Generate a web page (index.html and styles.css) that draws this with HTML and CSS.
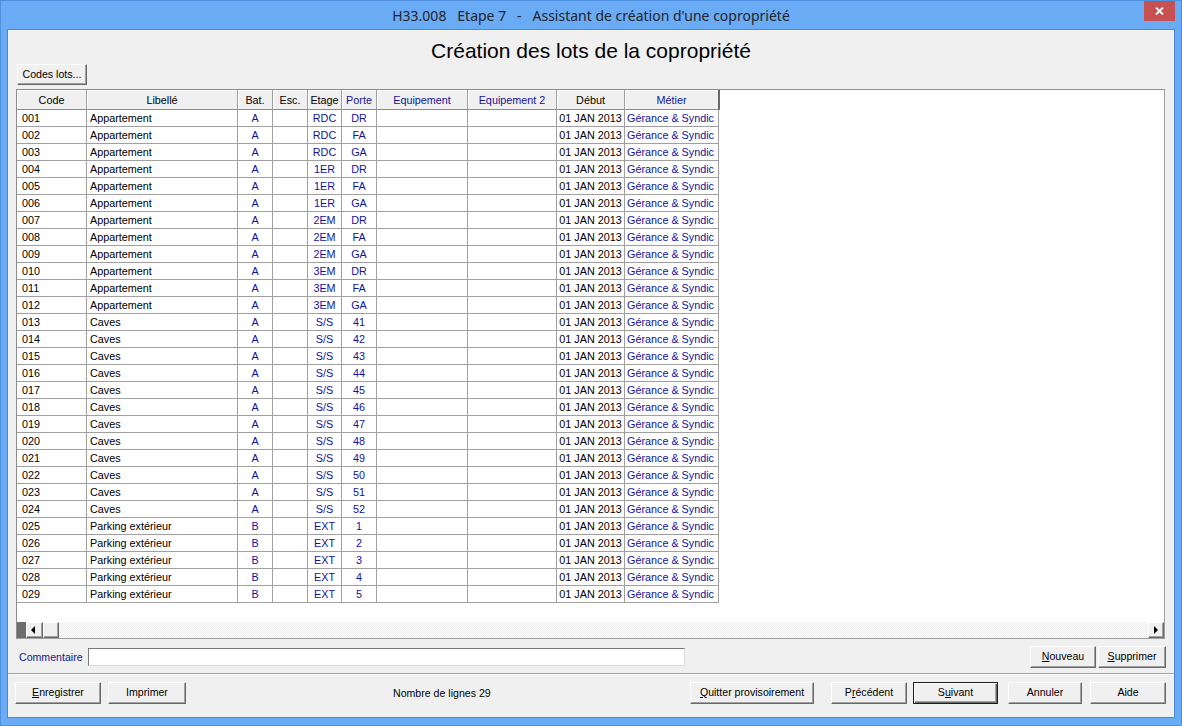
FILE: index.html
```html
<!DOCTYPE html>
<html lang="fr">
<head>
<meta charset="utf-8">
<title>H33.008 Etape 7 - Assistant de création d'une copropriété</title>
<link rel="stylesheet" href="styles.css">
</head>
<body>
<div class="window">
  <header class="titlebar">
    <div class="title">H33.008   Etape 7   -   Assistant de création d'une copropriété</div>
    <button class="close" aria-label="Fermer"><svg width="9" height="8" viewBox="0 0 9 8"><path d="M1 0.5 L8 7.5 M8 0.5 L1 7.5" stroke="#fff" stroke-width="1.8" fill="none"/></svg></button>
  </header>
  <main class="client">
    <h1 class="heading">Création des lots de la copropriété</h1>
    <div class="toolbar"><button class="btn btn-codes">Codes lots...</button></div>
    <section class="frame">
      <div class="grid">
        <div class="row head">
          <span>Code</span><span>Libellé</span><span>Bat.</span><span>Esc.</span><span>Etage</span><span class="b">Porte</span><span class="b">Equipement</span><span class="b">Equipement 2</span><span>Début</span><span class="b">Métier</span>
        </div>
        <div class="row"><span>001</span><span>Appartement</span><span class="b">A</span><span></span><span class="b">RDC</span><span class="b">DR</span><span></span><span></span><span>01 JAN 2013</span><span class="b">Gérance &amp; Syndic</span></div>
        <div class="row"><span>002</span><span>Appartement</span><span class="b">A</span><span></span><span class="b">RDC</span><span class="b">FA</span><span></span><span></span><span>01 JAN 2013</span><span class="b">Gérance &amp; Syndic</span></div>
        <div class="row"><span>003</span><span>Appartement</span><span class="b">A</span><span></span><span class="b">RDC</span><span class="b">GA</span><span></span><span></span><span>01 JAN 2013</span><span class="b">Gérance &amp; Syndic</span></div>
        <div class="row"><span>004</span><span>Appartement</span><span class="b">A</span><span></span><span class="b">1ER</span><span class="b">DR</span><span></span><span></span><span>01 JAN 2013</span><span class="b">Gérance &amp; Syndic</span></div>
        <div class="row"><span>005</span><span>Appartement</span><span class="b">A</span><span></span><span class="b">1ER</span><span class="b">FA</span><span></span><span></span><span>01 JAN 2013</span><span class="b">Gérance &amp; Syndic</span></div>
        <div class="row"><span>006</span><span>Appartement</span><span class="b">A</span><span></span><span class="b">1ER</span><span class="b">GA</span><span></span><span></span><span>01 JAN 2013</span><span class="b">Gérance &amp; Syndic</span></div>
        <div class="row"><span>007</span><span>Appartement</span><span class="b">A</span><span></span><span class="b">2EM</span><span class="b">DR</span><span></span><span></span><span>01 JAN 2013</span><span class="b">Gérance &amp; Syndic</span></div>
        <div class="row"><span>008</span><span>Appartement</span><span class="b">A</span><span></span><span class="b">2EM</span><span class="b">FA</span><span></span><span></span><span>01 JAN 2013</span><span class="b">Gérance &amp; Syndic</span></div>
        <div class="row"><span>009</span><span>Appartement</span><span class="b">A</span><span></span><span class="b">2EM</span><span class="b">GA</span><span></span><span></span><span>01 JAN 2013</span><span class="b">Gérance &amp; Syndic</span></div>
        <div class="row"><span>010</span><span>Appartement</span><span class="b">A</span><span></span><span class="b">3EM</span><span class="b">DR</span><span></span><span></span><span>01 JAN 2013</span><span class="b">Gérance &amp; Syndic</span></div>
        <div class="row"><span>011</span><span>Appartement</span><span class="b">A</span><span></span><span class="b">3EM</span><span class="b">FA</span><span></span><span></span><span>01 JAN 2013</span><span class="b">Gérance &amp; Syndic</span></div>
        <div class="row"><span>012</span><span>Appartement</span><span class="b">A</span><span></span><span class="b">3EM</span><span class="b">GA</span><span></span><span></span><span>01 JAN 2013</span><span class="b">Gérance &amp; Syndic</span></div>
        <div class="row"><span>013</span><span>Caves</span><span class="b">A</span><span></span><span class="b">S/S</span><span class="b">41</span><span></span><span></span><span>01 JAN 2013</span><span class="b">Gérance &amp; Syndic</span></div>
        <div class="row"><span>014</span><span>Caves</span><span class="b">A</span><span></span><span class="b">S/S</span><span class="b">42</span><span></span><span></span><span>01 JAN 2013</span><span class="b">Gérance &amp; Syndic</span></div>
        <div class="row"><span>015</span><span>Caves</span><span class="b">A</span><span></span><span class="b">S/S</span><span class="b">43</span><span></span><span></span><span>01 JAN 2013</span><span class="b">Gérance &amp; Syndic</span></div>
        <div class="row"><span>016</span><span>Caves</span><span class="b">A</span><span></span><span class="b">S/S</span><span class="b">44</span><span></span><span></span><span>01 JAN 2013</span><span class="b">Gérance &amp; Syndic</span></div>
        <div class="row"><span>017</span><span>Caves</span><span class="b">A</span><span></span><span class="b">S/S</span><span class="b">45</span><span></span><span></span><span>01 JAN 2013</span><span class="b">Gérance &amp; Syndic</span></div>
        <div class="row"><span>018</span><span>Caves</span><span class="b">A</span><span></span><span class="b">S/S</span><span class="b">46</span><span></span><span></span><span>01 JAN 2013</span><span class="b">Gérance &amp; Syndic</span></div>
        <div class="row"><span>019</span><span>Caves</span><span class="b">A</span><span></span><span class="b">S/S</span><span class="b">47</span><span></span><span></span><span>01 JAN 2013</span><span class="b">Gérance &amp; Syndic</span></div>
        <div class="row"><span>020</span><span>Caves</span><span class="b">A</span><span></span><span class="b">S/S</span><span class="b">48</span><span></span><span></span><span>01 JAN 2013</span><span class="b">Gérance &amp; Syndic</span></div>
        <div class="row"><span>021</span><span>Caves</span><span class="b">A</span><span></span><span class="b">S/S</span><span class="b">49</span><span></span><span></span><span>01 JAN 2013</span><span class="b">Gérance &amp; Syndic</span></div>
        <div class="row"><span>022</span><span>Caves</span><span class="b">A</span><span></span><span class="b">S/S</span><span class="b">50</span><span></span><span></span><span>01 JAN 2013</span><span class="b">Gérance &amp; Syndic</span></div>
        <div class="row"><span>023</span><span>Caves</span><span class="b">A</span><span></span><span class="b">S/S</span><span class="b">51</span><span></span><span></span><span>01 JAN 2013</span><span class="b">Gérance &amp; Syndic</span></div>
        <div class="row"><span>024</span><span>Caves</span><span class="b">A</span><span></span><span class="b">S/S</span><span class="b">52</span><span></span><span></span><span>01 JAN 2013</span><span class="b">Gérance &amp; Syndic</span></div>
        <div class="row"><span>025</span><span>Parking extérieur</span><span class="b">B</span><span></span><span class="b">EXT</span><span class="b">1</span><span></span><span></span><span>01 JAN 2013</span><span class="b">Gérance &amp; Syndic</span></div>
        <div class="row"><span>026</span><span>Parking extérieur</span><span class="b">B</span><span></span><span class="b">EXT</span><span class="b">2</span><span></span><span></span><span>01 JAN 2013</span><span class="b">Gérance &amp; Syndic</span></div>
        <div class="row"><span>027</span><span>Parking extérieur</span><span class="b">B</span><span></span><span class="b">EXT</span><span class="b">3</span><span></span><span></span><span>01 JAN 2013</span><span class="b">Gérance &amp; Syndic</span></div>
        <div class="row"><span>028</span><span>Parking extérieur</span><span class="b">B</span><span></span><span class="b">EXT</span><span class="b">4</span><span></span><span></span><span>01 JAN 2013</span><span class="b">Gérance &amp; Syndic</span></div>
        <div class="row"><span>029</span><span>Parking extérieur</span><span class="b">B</span><span></span><span class="b">EXT</span><span class="b">5</span><span></span><span></span><span>01 JAN 2013</span><span class="b">Gérance &amp; Syndic</span></div>
      </div>
      <div class="hscroll">
        <div class="corner"></div>
        <div class="sb-btn sb-left"><i class="tri-left"></i></div>
        <div class="sb-btn sb-thumb"></div>
        <div class="sb-track"></div>
        <div class="sb-btn sb-right"><i class="tri-right"></i></div>
      </div>
    </section>
    <div class="comment-row">
      <label class="comment-label" for="comment">Commentaire</label>
      <input class="comment-input" id="comment" type="text">
      <div class="comment-actions">
        <button class="btn btn-nouveau"><u>N</u>ouveau</button>
        <button class="btn btn-supprimer"><u>S</u>upprimer</button>
      </div>
    </div>
    <div class="sep"></div>
    <footer class="actions">
      <button class="btn btn-enr"><u>E</u>nregistrer</button>
      <button class="btn btn-imp">Imprimer</button>
      <span class="count">Nombre de lignes 29</span>
      <div class="nav">
        <button class="btn btn-quit"><u>Q</u>uitter provisoirement</button>
        <button class="btn btn-prec">P<u>r</u>écédent</button>
        <button class="btn btn-suiv default">S<u>u</u>ivant</button>
        <button class="btn btn-ann">Annuler</button>
        <button class="btn btn-aide">Aide</button>
      </div>
    </footer>
  </main>
</div>
</body>
</html>
```

FILE: styles.css
```css
* { box-sizing: border-box; }
html, body { margin: 0; padding: 0; }
body {
  width: 1182px;
  height: 726px;
  overflow: hidden;
  background: #6aabf6;
  font-family: "Liberation Sans", Arial, sans-serif;
  font-size: 10.6px;
  color: #000;
}
.window {
  width: 1182px;
  height: 726px;
  border: 1px solid #4f8fe0;
  background: #6aabf6;
  display: flex;
  flex-direction: column;
}
.titlebar {
  height: 28px;
  flex: none;
  display: grid;
  grid-template-columns: 1fr auto 1fr;
  align-items: start;
}
.title {
  grid-column: 2;
  line-height: 29px;
  font-family: "Noto Sans", "Open Sans", sans-serif;
  font-size: 14px;
  color: #252525;
  white-space: pre;
}
.close {
  grid-column: 3;
  justify-self: end;
  margin-right: 6px;
  width: 31px;
  height: 20px;
  padding: 0;
  border: 0;
  background: #c75050;
  display: flex;
  align-items: center;
  justify-content: center;
}
.close svg { display: block; }
.client {
  margin: 0 6px;
  height: 689px;
  flex: none;
  border: 1px solid #4a88d6;
  background: #f0f0f0;
  display: flex;
  flex-direction: column;
}
.heading {
  margin: 0;
  height: 32px;
  padding-top: 9px;
  line-height: 24px;
  font-size: 21px;
  font-weight: normal;
  text-align: center;
  font-family: "Liberation Sans", Arial, sans-serif;
  flex: none;
}
.toolbar {
  margin-top: 2px;
  padding-left: 9px;
  height: 21px;
  display: flex;
  flex: none;
}
.btn {
  font-family: "Liberation Sans", Arial, sans-serif;
  font-size: 10.6px;
  color: #000;
  background: #f0f0f0;
  border: 1px solid;
  border-color: #fff #696969 #696969 #fff;
  box-shadow: inset -1px -1px 0 #a0a0a0;
  padding: 0 0 2px;
  height: 22px;
  line-height: 16px;
  text-align: center;
  white-space: nowrap;
}
.btn u { text-decoration: underline; text-underline-offset: 1px; }
.btn-codes { width: 70px; height: 21px; }
.frame {
  margin: 4px 0 0 8px;
  width: 1149px;
  height: 550px;
  flex: none;
  border: 1px solid #a0a0a0;
  border-top-color: #8c8c8c;
  border-left-color: #8c8c8c;
  display: flex;
  flex-direction: column;
  background: #fff;
}
.grid {
  flex: 1;
  overflow: hidden;
  background: #fff;
  font-size: 10.8px;
}
.row {
  display: grid;
  grid-template-columns: 70px 151px 35px 35px 34px 35px 91px 89px 68px 94px;
  width: max-content;
  height: 17px;
}
.row > span {
  border-right: 1px solid #a0a0a0;
  border-bottom: 1px solid #a0a0a0;
  line-height: 16px;
  white-space: nowrap;
  overflow: hidden;
  text-align: center;
}
.row > span:nth-child(1) { text-align: left; padding-left: 5px; }
.row > span:nth-child(2) { text-align: left; padding-left: 3px; }
.row > span:nth-child(10) { text-align: left; padding-left: 2px; }
.row > span.b { color: #12129c; }
.row.head {
  height: 20px;
  grid-template-columns: 70px 151px 35px 35px 34px 35px 91px 89px 68px 95px;
}
.row.head > span {
  background: #f0f0f0;
  box-shadow: inset 1px 1px 0 #fff;
  border-bottom-color: #8a8a8a;
  padding-top: 2px;
  line-height: 17px;
  text-align: center;
  padding-left: 0;
}
.row.head > span:nth-child(10) {
  border-right: 2px solid #696969;
}
.hscroll {
  height: 16px;
  flex: none;
  display: flex;
}
.corner {
  width: 9px;
  background: #6d6d6d;
}
.sb-btn {
  background: #f0f0f0;
  border: 1px solid;
  border-color: #fff #696969 #696969 #fff;
  box-shadow: inset -1px -1px 0 #a0a0a0;
  display: flex;
  align-items: center;
  justify-content: center;
}
.sb-left { width: 17px; }
.sb-thumb { width: 16px; }
.sb-right { width: 16px; }
.sb-track {
  flex: 1;
  background: repeating-conic-gradient(#ececec 0 25%, #fdfdfd 0 50%) 0 0 / 2px 2px;
}
.tri-left {
  display: block;
  width: 0; height: 0;
  border-top: 4px solid transparent;
  border-bottom: 4px solid transparent;
  border-right: 4px solid #000;
  margin-right: 3px;
}
.tri-right {
  display: block;
  width: 0; height: 0;
  border-top: 4px solid transparent;
  border-bottom: 4px solid transparent;
  border-left: 4px solid #000;
}
.comment-row {
  margin-top: 7px;
  height: 22px;
  flex: none;
  display: flex;
  align-items: center;
  padding: 0 8px 0 11px;
}
.comment-label {
  width: 69px;
  color: #14148f;
}
.comment-input {
  width: 597px;
  height: 18px;
  margin: 0;
  padding: 0 2px;
  border: 1px solid;
  border-color: #7a7a7a #dcdcdc #dcdcdc #7a7a7a;
  background: #fff;
  font-family: "Liberation Sans", Arial, sans-serif;
  font-size: 10.6px;
}
.comment-actions {
  margin-left: auto;
  display: flex;
  gap: 2px;
}
.btn-nouveau { width: 66px; }
.btn-supprimer { width: 68px; }
.sep {
  margin-top: 5px;
  height: 2px;
  flex: none;
  border-top: 1px solid #a0a0a0;
  border-bottom: 1px solid #fff;
}
.actions {
  margin-top: 7px;
  height: 22px;
  flex: none;
  display: flex;
  align-items: center;
  padding: 0 8px 0 7px;
}
.btn-enr { width: 86px; }
.btn-imp { width: 78px; margin-left: 7px; }
.count { margin-left: 207px; }
.nav {
  margin-left: auto;
  display: flex;
}
.btn-quit { width: 124px; }
.btn-prec { width: 76px; margin-left: 17px; }
.btn-suiv { width: 85px; margin-left: 6px; }
.btn-ann { width: 74px; margin-left: 10px; }
.btn-aide { width: 76px; margin-left: 8px; }
.btn.default {
  border: 1px solid #1e1e1e;
  box-shadow: inset 1px 1px 0 #fff, inset -1px -1px 0 #696969, inset -2px -2px 0 #a0a0a0;
}
```
